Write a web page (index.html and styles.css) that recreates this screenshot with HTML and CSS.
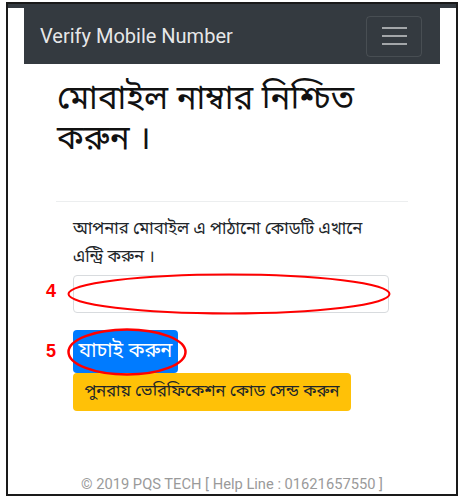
FILE: index.html
```html
<!DOCTYPE html>
<html lang="bn">
<head>
<meta charset="utf-8">
<title>Verify Mobile Number</title>
<link rel="stylesheet" href="styles.css">
</head>
<body>
<div class="frame">
  <div class="topstrip"></div>
  <nav class="navbar">
    <span class="brand">Verify Mobile Number</span>
    <button class="toggler" type="button" aria-label="Menu">
      <span class="bar"></span><span class="bar"></span><span class="bar"></span>
    </button>
  </nav>
  <main class="content">
    <h1 class="title">মোবাইল নাম্বার নিশ্চিত করুন ।</h1>
    <hr class="rule">
    <form class="verify">
      <p class="hint">আপনার মোবাইল এ পাঠানো কোডটি এখানে এন্ট্রি করুন ।</p>
      <div class="field">
        <span class="mark mark-field">4</span>
        <input class="code" type="text">
        <svg class="ring ring-field" viewBox="0 0 324 42" preserveAspectRatio="none"><ellipse cx="162" cy="21" rx="160.5" ry="19.5" fill="none" stroke="#f00" stroke-width="2"/></svg>
      </div>
      <div class="btn-row">
        <span class="mark mark-btn">5</span>
        <button class="btn btn-primary" type="button">যাচাই করুন</button>
        <svg class="ring ring-btn" viewBox="0 0 120 48" preserveAspectRatio="none"><ellipse cx="60" cy="24" rx="58.5" ry="22.5" fill="none" stroke="#f00" stroke-width="2.5"/></svg>
      </div>
      <button class="btn btn-warning" type="button">পুনরায় ভেরিফিকেশন কোড সেন্ড করুন</button>
    </form>
  </main>
  <footer class="footer">© 2019 PQS TECH [ Help Line : 01621657550 ]</footer>
</div>
</body>
</html>
```

FILE: styles.css
```css
* { box-sizing: border-box; }
html, body { margin: 0; padding: 0; background: #fff; }
body {
  font-family: "Noto Sans Bengali", "Lohit Bengali", "Noto Sans", Roboto, sans-serif;
  color: #212529;
}
.frame {
  width: 452px;
  height: 494px;
  margin: 2px 0 0 6px;
  border: 2px solid #1a1a1a;
  display: flex;
  flex-direction: column;
}
.topstrip {
  height: 4px;
  background: #343a40;
}
.navbar {
  margin: 0 16px;
  height: 56px;
  background: #343a40;
  display: flex;
  align-items: center;
  justify-content: space-between;
  padding: 0 18px 0 16px;
}
.brand {
  font-family: Roboto, "Noto Sans", sans-serif;
  font-size: 20px;
  color: rgba(255,255,255,0.9);
}
.toggler {
  width: 56px;
  height: 41px;
  background: transparent;
  border: 1px solid rgba(255,255,255,0.1);
  border-radius: 4px;
  display: flex;
  flex-direction: column;
  align-items: center;
  justify-content: center;
  gap: 6px;
  padding: 0;
}
.bar {
  display: block;
  width: 25px;
  height: 2px;
  background: rgba(255,255,255,0.55);
}
.content {
  margin: 0 48px 0 48px;
  width: 352px;
}
.title {
  margin: 17px 0 0 1px;
  font-size: 33px;
  font-weight: 400;
  line-height: 40px;
  color: #111;
}
.rule {
  margin: 40px 0 0 0;
  border: 0;
  border-top: 1px solid #eceeef;
}
.verify {
  padding: 0 19px 0 17px;
}
.hint {
  margin: 14px 0 0 0;
  font-size: 16.7px;
  line-height: 28px;
  color: #212529;
}
.field {
  position: relative;
  margin-top: 3px;
}
.code {
  display: block;
  width: 316px;
  height: 38px;
  border: 1px solid #d8dbde;
  border-radius: 4px;
  background: #fff;
}
.mark {
  position: absolute;
  font-family: "Liberation Sans", Arial, sans-serif;
  font-weight: bold;
  font-size: 18px;
  color: #f00;
  line-height: 1;
}
.mark-field { left: -27px; top: 7px; }
.mark-btn { left: -27px; top: 12px; }
.ring { position: absolute; }
.ring-field { left: -6px; top: -2px; width: 324px; height: 42px; }
.ring-btn { left: -6px; top: -2px; width: 120px; height: 48px; }
.btn-row {
  position: relative;
  margin-top: 17px;
  width: 105px;
}
.btn {
  display: block;
  border: 1px solid transparent;
  border-radius: 4px;
  font-family: inherit;
  white-space: nowrap;
  padding: 0 4px;
}
.btn-primary {
  width: 105px;
  height: 43px;
  background: #007bff;
  color: #fff;
  font-size: 20px;
}
.btn-warning {
  width: 278px;
  height: 38px;
  background: #ffc107;
  color: #212529;
  font-size: 16.5px;
}
.footer {
  margin-top: auto;
  padding-bottom: 1px;
  text-align: center;
  font-family: Roboto, sans-serif;
  font-size: 14.7px;
  color: #9a9a9a;
}
```
